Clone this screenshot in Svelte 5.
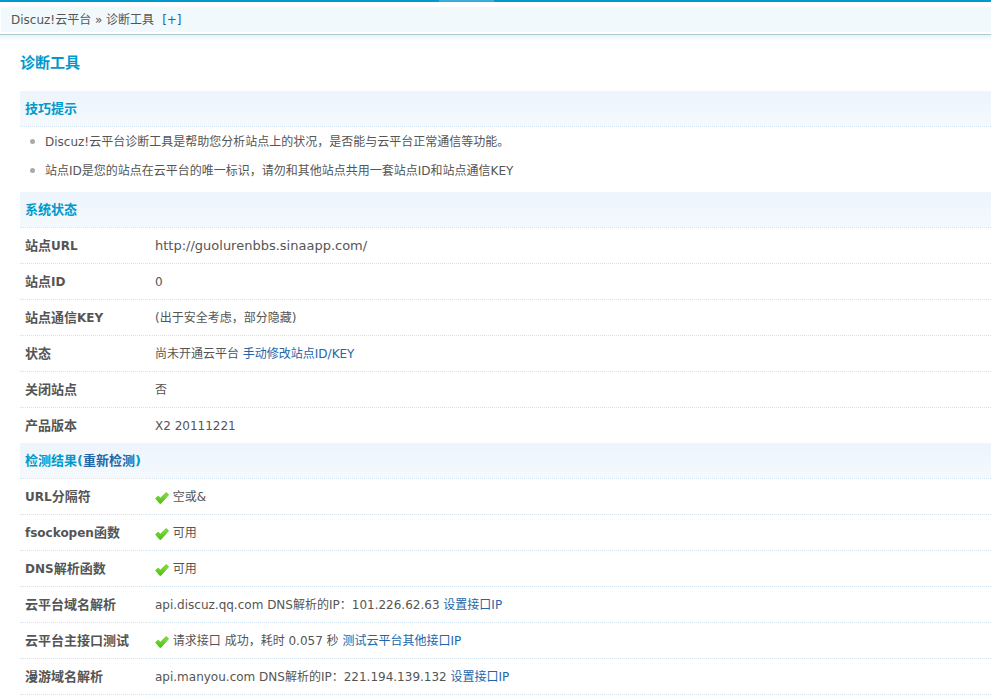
<script lang="ts">
    type Row = {
        label: string;
        ok?: boolean;
        url?: boolean;
        text: string;
        link?: string;
    };

    const tips = [
        "Discuz!云平台诊断工具是帮助您分析站点上的状况，是否能与云平台正常通信等功能。",
        "站点ID是您的站点在云平台的唯一标识，请勿和其他站点共用一套站点ID和站点通信KEY",
    ];

    const status: Row[] = [
        { label: "站点URL", url: true, text: "http://guolurenbbs.sinaapp.com/" },
        { label: "站点ID", text: "0" },
        { label: "站点通信KEY", text: "(出于安全考虑，部分隐藏)" },
        { label: "状态", text: "尚未开通云平台", link: "手动修改站点ID/KEY" },
        { label: "关闭站点", text: "否" },
        { label: "产品版本", text: "X2 20111221" },
    ];

    const results: Row[] = [
        { label: "URL分隔符", ok: true, text: "空或&" },
        { label: "fsockopen函数", ok: true, text: "可用" },
        { label: "DNS解析函数", ok: true, text: "可用" },
        {
            label: "云平台域名解析",
            text: "api.discuz.qq.com DNS解析的IP：101.226.62.63",
            link: "设置接口IP",
        },
        {
            label: "云平台主接口测试",
            ok: true,
            text: "请求接口 成功，耗时 0.057 秒",
            link: "测试云平台其他接口IP",
        },
        {
            label: "漫游域名解析",
            text: "api.manyou.com DNS解析的IP：221.194.139.132",
            link: "设置接口IP",
        },
    ];

    // latin runs in bold labels are set one size smaller than the hanzi
    const split = (label: string) => label.match(/[A-Za-z]+|[^A-Za-z]+/g) ?? [];
</script>

{#snippet rows(items: Row[])}
    {#each items as row (row.label)}
        <tr>
            <th scope="row">
                {#each split(row.label) as part}<span class:latin={/^[A-Za-z]/.test(part)}>{part}</span>{/each}
            </th>
            <td class:url={row.url}>
                {#if row.ok}
                    <svg class="tick" viewBox="0 0 14 12" role="img" aria-label="OK">
                        <defs>
                            <linearGradient id="tick-fill" x1="0" y1="0" x2="0" y2="1">
                                <stop offset="0" stop-color="#8be33a" />
                                <stop offset="1" stop-color="#4fc012" />
                            </linearGradient>
                        </defs>
                        <path
                            d="M0.6 6.6 3 4.2 5.5 6.1 11.2 0.6 13.5 2.8 6 11.4 4.8 11.4Z"
                            fill="url(#tick-fill)"
                            stroke="#58bd2c"
                            stroke-width="0.8"
                            stroke-linejoin="round"
                        />
                    </svg>
                {/if}
                {row.text}
                {#if row.link}
                    <a href="#top">{row.link}</a>
                {/if}
            </td>
        </tr>
    {/each}
{/snippet}

<div class="page" id="top">
    <div class="topbar"><div class="topbar__mark"></div></div>
    <nav class="crumbs">
        <span>Discuz!云平台 » 诊断工具</span>
        <a href="#top">[+]</a>
    </nav>
    <div class="shade"></div>

    <main>
        <h1>诊断工具</h1>

        <table>
            <colgroup>
                <col class="col-label" />
                <col />
            </colgroup>
            <tbody>
                <tr class="band"><th colspan="2">技巧提示</th></tr>
                <tr>
                    <td class="tips" colspan="2">
                        <ul>
                            {#each tips as tip}
                                <li>{tip}</li>
                            {/each}
                        </ul>
                    </td>
                </tr>
            </tbody>
            <tbody>
                <tr class="band"><th colspan="2">系统状态</th></tr>
                {@render rows(status)}
            </tbody>
            <tbody class="last">
                <tr class="band"><th colspan="2">检测结果(<a href="#top">重新检测</a>)</th></tr>
                {@render rows(results)}
            </tbody>
        </table>
    </main>
</div>

<style>
    :global(body) {
        margin: 0;
        background: #fff;
    }

    .page {
        color: #555;
        font-family: "DejaVu Sans", "Noto Sans CJK SC", sans-serif;
        font-size: 12px;
        line-height: 18px;
    }

    a {
        color: #2366a8;
        text-decoration: none;
    }

    .topbar {
        height: 2px;
        background: #0099cc;
    }

    .topbar__mark {
        width: 55px;
        height: 2px;
        margin-left: 44.3%;
        background: #3aaed8;
    }

    .crumbs {
        display: flex;
        gap: 8px;
        align-items: center;
        height: 25px;
        margin: 5px 0 2px 1px;
        padding-left: 10px;
        background: #f2f9fd;
    }

    .shade {
        height: 6px;
        border-top: 1px solid #a6cbd6;
        background: linear-gradient(#e8f2f8, #fff);
    }

    main {
        padding-left: 20px;
    }

    h1 {
        margin: 0;
        padding: 12px 0 18px;
        color: #0099cc;
        font-size: 15px;
        line-height: 20px;
    }

    table {
        width: 100%;
        border-collapse: separate;
        border-spacing: 0;
        table-layout: fixed;
    }

    .col-label {
        width: 130px;
    }

    th,
    td {
        height: 35px;
        padding: 0 5px;
        border-top: 1px dotted #d3e4ee;
        text-align: left;
    }

    th {
        font-size: 13px;
    }

    .latin {
        font-size: 12px;
    }

    .url {
        font-size: 13px;
    }

    .band th {
        border-top: 0;
        background: linear-gradient(#edf4fc, #f4f9fd);
        color: #0099cc;
    }

    .last tr:last-child > :global(*) {
        border-bottom: 1px dotted #d3e4ee;
    }

    .tips {
        height: auto;
    }

    ul {
        margin: 0;
        padding: 0 0 7px;
        list-style: none;
    }

    li {
        display: flex;
        gap: 10px;
        align-items: center;
        padding: 6px 0 5px 5px;
    }

    li::before {
        width: 5px;
        height: 5px;
        margin-bottom: 2px;
        border-radius: 50%;
        background: #aaa;
        content: "";
    }

    .tick {
        width: 14px;
        height: 12px;
        vertical-align: -3px;
    }
</style>
